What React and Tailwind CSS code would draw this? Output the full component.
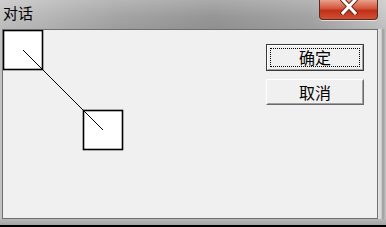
export default function App() {
  return (
    <div className="w-[386px] h-[227px] bg-black overflow-hidden">
      <div className="h-[225px] flex flex-col bg-[linear-gradient(90deg,#c2c2c2_0%,#a4a4a4_30%,#959595_55%,#a2a2a2_80%,#c6c6c6_100%)]">
        {/* Title bar */}
        <div className="relative h-[29px] bg-[linear-gradient(180deg,rgba(255,255,255,0.2)_0%,rgba(255,255,255,0)_60%,rgba(0,0,0,0.04)_100%)]">
          <div
            className="absolute left-[3px] top-[4px] text-[15px] leading-[18px] text-black"
            style={{ fontFamily: '"Noto Sans CJK SC", sans-serif' }}
          >
            对话
          </div>
          <div className="absolute left-[319px] top-0 w-[59px] h-[20px] rounded-b-[4px] border border-t-0 border-[#5a2a22] bg-[linear-gradient(180deg,#e8a08c_0%,#d2553a_45%,#c0301a_55%,#d05030_100%)] flex items-start justify-center shadow-[0_1px_0_rgba(255,255,255,0.6)]">
            <svg width="18" height="15" viewBox="0 0 18 15">
              <path d="M3 0 L15 13 M15 0 L3 13" stroke="#6b2a1c" strokeWidth="5" strokeLinecap="square" />
              <path d="M3 0 L15 13 M15 0 L3 13" stroke="#ffffff" strokeWidth="3" strokeLinecap="square" />
            </svg>
          </div>
        </div>
        {/* Client area */}
        <div className="flex">
          <div className="ml-[2px] w-[376px] h-[190px] border border-[#6f6f6f] bg-[#f0f0f0] relative flex justify-end">
            <svg className="absolute left-0 top-0" width="130" height="130" viewBox="0 0 130 130">
              <rect x="0.5" y="0.5" width="39" height="39" fill="#ffffff" stroke="#000" strokeWidth="1.6" />
              <rect x="80.5" y="80.5" width="39" height="39" fill="#ffffff" stroke="#000" strokeWidth="1.6" />
              <line x1="20" y1="20" x2="100" y2="100" stroke="#000" strokeWidth="1" />
            </svg>
            <div
              className="mt-[14px] mr-[13px] flex flex-col gap-[8px] text-[16px] text-black"
              style={{ fontFamily: '"Noto Sans CJK SC", sans-serif' }}
            >
              <div className="w-[98px] h-[27px] border border-[#3a3a3a] bg-[#f0f0f0]">
                <div className="relative h-full border border-t-white border-l-white border-b-[#a0a0a0] border-r-[#a0a0a0] flex items-center justify-center leading-none">
                  <div className="absolute inset-[2px] border border-dotted border-black"></div>
                  <span className="mb-[1px]">确定</span>
                </div>
              </div>
              <div className="w-[98px] h-[26px] border border-t-white border-l-white border-b-[#6a6a6a] border-r-[#6a6a6a] bg-[#f0f0f0]">
                <div className="h-full border border-transparent border-b-[#a0a0a0] border-r-[#a0a0a0] flex items-center justify-center leading-none">
                  <span className="mb-[1px]">取消</span>
                </div>
              </div>
            </div>
          </div>
          <div className="w-[8px] h-[190px] bg-[linear-gradient(90deg,#e4e4e4_0%,#d4d4d4_40%,#9a9a9a_60%,#c8c8c8_100%)]"></div>
        </div>
        <div className="flex-1 bg-[linear-gradient(180deg,#b8b8b8_0%,#a4a4a4_100%)]"></div>
      </div>
    </div>
  );
}
